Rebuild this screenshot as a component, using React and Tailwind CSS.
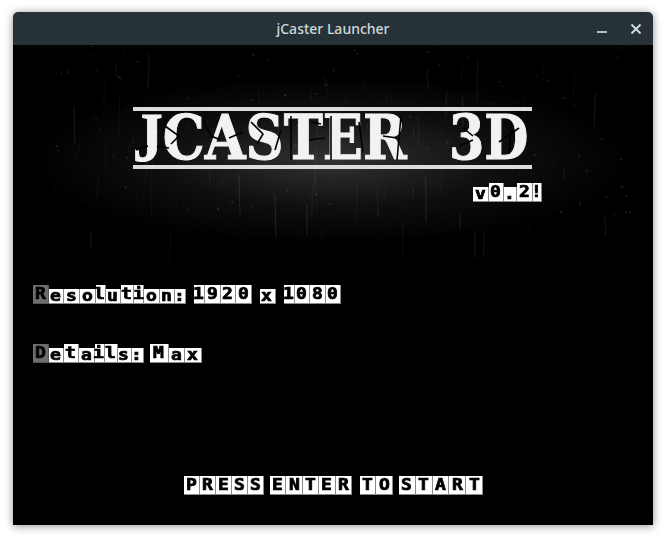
import React from "react";

const WIDTHS = { l: 10, i: 10, t: 13, ":": 11, "1": 11, ".": 13, "!": 9, M: 19, x: 16, s: 16 };
const SHORT = "aceimnorsuvx:.";

function Cell({ ch, w, base, active }) {
  if (ch === " ") return <span className="inline-block" style={{ width: w || 8 }}>&nbsp;</span>;
  const short = SHORT.includes(ch) && ch !== "i";
  const width = w || WIDTHS[ch] || base || 15.5;
  return (
    <span
      style={{ width }}
      className={
        "flex shrink-0 items-center justify-center border-r border-b text-[15px] leading-none font-bold text-black [font-family:'DejaVu_Sans_Mono',monospace] [-webkit-text-stroke:0.7px_#000] " +
        (short ? "h-[15px] " : "h-[19px] ") +
        (active ? "border-[#555] bg-[#6e6e6e]" : "border-[#8a8a8a] bg-white")
      }
    >
      <span className="inline-block scale-x-[1.2]">{ch}</span>
    </span>
  );
}

function PixelText({ text, activeFirst, className = "", widths = {}, base }) {
  return (
    <div className={"flex items-end " + className}>
      {[...text].map((c, i) => (
        <Cell key={i} ch={c} w={widths[i]} base={base} active={activeFirst && i === 0} />
      ))}
    </div>
  );
}

function rng(seed) {
  let s = seed;
  return () => {
    s = (s * 16807) % 2147483647;
    return s / 2147483647;
  };
}

function Grunge() {
  const r = rng(4242);
  const lines = [];
  for (let i = 0; i < 70; i++) {
    const x = 60 + r() * 540;
    const y = r() * 190;
    const h = 6 + r() * 40;
    lines.push(<line key={i} x1={x} y1={y} x2={x + (r() - 0.5) * 2} y2={y + h} stroke="#fff" strokeOpacity={0.02 + r() * 0.06} strokeWidth={0.5 + r()} />);
  }
  const specks = [];
  for (let i = 0; i < 320; i++) {
    specks.push(<circle key={i} cx={40 + r() * 590} cy={r() * 170} r={0.4 + r() * 0.8} fill="#fff" fillOpacity={0.03 + r() * 0.1} />);
  }
  return (
    <svg className="absolute inset-0 h-full w-full" viewBox="0 0 640 480">
      <defs>
        <radialGradient id="glow" cx="0.5" cy="0.5" r="0.5">
          <stop offset="0" stopColor="#fff" stopOpacity="0.2" />
          <stop offset="0.55" stopColor="#fff" stopOpacity="0.06" />
          <stop offset="1" stopColor="#fff" stopOpacity="0" />
        </radialGradient>
      </defs>
      <ellipse cx="318" cy="115" rx="300" ry="85" fill="url(#glow)" />
      {lines}
      {specks}
      <path d="M262 150 l1 42 M294 160 l0 30 M226 130 l1 40" stroke="#fff" strokeOpacity=".1" />
    </svg>
  );
}

function Rule({ className = "" }) {
  return <div className={"h-[4px] w-[399px] bg-[#dcdcdc] blur-[0.7px] " + className} />;
}

function Cracks() {
  return (
    <svg className="absolute inset-0 h-full w-full" viewBox="0 0 399 52" fill="none" stroke="#000" strokeWidth="1.6">
      <path d="M3 38 l12 -4 M32 14 l14 10 l-8 8 M24 34 l12 2 M70 8 l8 16 l10 4 M96 26 l14 -6 M118 10 l12 12 l-6 10 M148 18 l-6 20 M158 4 l0 44 M178 10 l10 2 M176 28 l16 -2 M198 4 l0 44 M226 10 l4 30 M250 24 l14 2 M268 4 l-4 44 M330 16 l10 8 M326 34 l14 -6 M366 30 l20 -14 M378 12 l-2 30" />
    </svg>
  );
}

export default function App() {
  return (
    <div className="h-[541px] w-[666px] overflow-hidden bg-white pt-[12px] pl-[13px] [font-family:'Noto_Sans',sans-serif]">
      <div className="h-[513px] w-[640px] overflow-hidden rounded-t-[5px] shadow-[0_1px_8px_rgba(0,0,0,0.45)]">
        <header className="relative flex h-[33px] items-center justify-center bg-[#263238] text-[14px] font-medium text-[#cfd8dc]">
          jCaster Launcher
          <div className="absolute top-0 right-[12px] flex h-full items-center gap-[24px]">
            <span className="mt-[7px] h-[2px] w-[10px] bg-[#b0bec5]" />
            <svg width="10" height="10" viewBox="0 0 10 10" stroke="#cfd8dc" strokeWidth="2">
              <path d="M0.5 0.5 L9.5 9.5 M9.5 0.5 L0.5 9.5" />
            </svg>
          </div>
        </header>
        <main className="relative h-[480px] overflow-hidden bg-black">
          <Grunge />
          <div className="relative flex h-full flex-col">
            <div className="mt-[62px] ml-[120px] w-[399px]">
              <Rule />
              <div className="relative my-[1px] h-[52px]">
                <div className="flex origin-top-left scale-x-[0.85] whitespace-pre text-[62px] leading-[52px] font-bold text-[#f2f2f2] blur-[0.6px] [-webkit-text-stroke:1px_#f2f2f2] [font-family:'DejaVu_Serif',serif]">
                  <span className="text-[70px] [font-family:'Liberation_Serif',serif]">J</span>
                  <span>CASTER</span>
                </div>
                <div className="absolute top-0 left-[316px] origin-top-left scale-x-[0.82] text-[62px] leading-[52px] font-bold text-[#f2f2f2] blur-[0.6px] [-webkit-text-stroke:1px_#f2f2f2] [font-family:'DejaVu_Serif',serif]">
                  3D
                </div>
                <Cracks />
              </div>
              <Rule />
            </div>
            <PixelText text="v0.2!" className="mt-[14px] ml-[460px]" />
            <PixelText text="Resolution: 1920 x 1080" activeFirst className="mt-[78px] ml-[20px]" />
            <PixelText text="Details: Max" activeFirst className="mt-[35px] ml-[20px]" widths={{ 2: 15, 4: 10, 5: 13, 6: 14, 7: 12, 8: 6.5, 11: 17.5 }} />
            <PixelText
              text="PRESS ENTER TO START"
              base={16.4}
              className="mt-[108px] ml-[171px]"
              widths={{ 0: 16, 1: 16, 2: 16, 3: 16, 4: 16, 5: 6, 11: 8, 12: 16.5, 13: 16.5, 14: 6, 15: 16.8, 16: 16.8, 17: 16.8, 18: 16.8, 19: 16.8 }}
            />
          </div>
        </main>
      </div>
    </div>
  );
}
